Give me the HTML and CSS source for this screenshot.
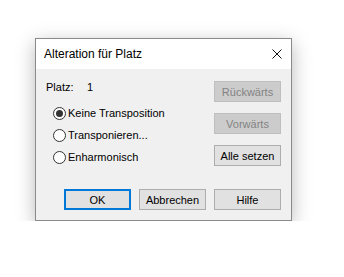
FILE: index.html
```html
<!DOCTYPE html>
<html>
<head>
<meta charset="utf-8">
<link rel="stylesheet" href="styles.css">
</head>
<body>
<div class="window">
  <div class="titlebar">
    <span class="title">Alteration für Platz</span>
    <svg class="close" width="10" height="10" viewBox="0 0 10 10"><path d="M0.5 0.5 L9.5 9.5 M9.5 0.5 L0.5 9.5" stroke="#111" stroke-width="1" fill="none"/></svg>
  </div>
  <div class="content">
    <div class="top">
      <div class="left">
        <div class="platz"><span class="plabel">Platz:</span><span>1</span></div>
        <div class="radios">
          <div class="radio"><span class="circle checked"></span><span>Keine Transposition</span></div>
          <div class="radio"><span class="circle"></span><span>Transponieren...</span></div>
          <div class="radio"><span class="circle"></span><span>Enharmonisch</span></div>
        </div>
      </div>
      <div class="right">
        <div class="btn disabled">Rückwärts</div>
        <div class="btn disabled">Vorwärts</div>
        <div class="btn">Alle setzen</div>
      </div>
    </div>
    <div class="bottom">
      <div class="btn default">OK</div>
      <div class="btn">Abbrechen</div>
      <div class="btn">Hilfe</div>
    </div>
  </div>
</div>
</body>
</html>
```
FILE: styles.css
```css
html, body {
  margin: 0;
  background: #ffffff;
}
body {
  padding: 38px 0 0 35px;
  font-family: "Liberation Sans", Arial, sans-serif;
  font-size: 11px;
  color: #000;
}
.window {
  width: 257px;
  box-sizing: border-box;
  border: 1px solid #8a8a8a;
  box-shadow: 0 5px 18px rgba(0, 0, 0, 0.28);
  background: #f0f0f0;
}
.titlebar {
  height: 30px;
  background: #fff;
  display: flex;
  align-items: center;
  justify-content: space-between;
  padding: 0 9px 0 8px;
}
.title {
  font-family: "Liberation Sans", Arial, sans-serif;
  font-size: 12px;
  color: #000;
}
.content {
  padding: 12px 10px 10px 10px;
}
.top {
  display: flex;
  justify-content: space-between;
}
.platz {
  display: flex;
  height: 13px;
  line-height: 13px;
}
.plabel {
  width: 41px;
}
.radios {
  margin-top: 8px;
  padding-left: 7px;
}
.radio {
  display: flex;
  align-items: center;
  height: 22px;
}
.circle {
  width: 13px;
  height: 13px;
  box-sizing: border-box;
  border: 1px solid #333;
  border-radius: 50%;
  background: #fff;
  margin-right: 2px;
  display: flex;
  align-items: center;
  justify-content: center;
}
.circle.checked::after {
  content: "";
  width: 7px;
  height: 7px;
  border-radius: 50%;
  background: #333;
}
.right {
  display: flex;
  flex-direction: column;
  gap: 11px;
}
.btn {
  width: 67px;
  height: 21px;
  box-sizing: border-box;
  border: 1px solid #adadad;
  background: #e1e1e1;
  display: flex;
  align-items: center;
  justify-content: center;
}
.btn.disabled {
  background: #cccccc;
  border-color: #bfbfbf;
  color: #838383;
}
.btn.default {
  border: 2px solid #0078d7;
}
.bottom {
  display: flex;
  justify-content: flex-end;
  gap: 8px;
  margin-top: 21px;
}
```
